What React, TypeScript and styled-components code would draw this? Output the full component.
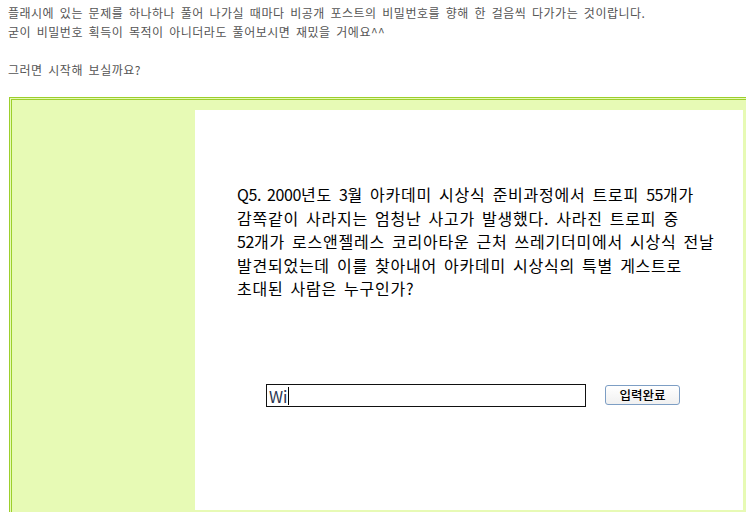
import React from "react";
import styled, { createGlobalStyle } from "styled-components";

const Global = createGlobalStyle`
  html, body { margin: 0; padding: 0; overflow: hidden; background: #fff; }
  body { font-family: "Noto Sans CJK KR", "Noto Sans", sans-serif; }
`;

const Page = styled.div`
  width: 746px;
  height: 512px;
  overflow: hidden;
`;

const Intro = styled.div`
  padding: 3px 8px 0 8px;
  font-size: 12px;
  line-height: 19px;
  color: #555;
  letter-spacing: 0.5px;
  word-spacing: 2.5px;
`;

const Line = styled.div`
  height: 19px;
  white-space: nowrap;
`;

const Frame = styled.div`
  margin: 18px 0 0 9px;
  width: 760px;
  border: 3px double #9ccf2c;
  border-right: none;
  background: #e7fab5;
  padding: 10px 0 2px 183px;
`;

const Stage = styled.div`
  width: 548px;
  height: 400px;
  background: #fff;
  display: flex;
  flex-direction: column;
`;

const Question = styled.div`
  margin: 73px 0 0 42px;
  font-size: 16px;
  line-height: 23.5px;
  color: #000;
  white-space: nowrap;
  letter-spacing: 0.75px;
  word-spacing: 2.8px;
`;

const Num = styled.span`
  letter-spacing: -0.4px;
`;

const AnswerRow = styled.div`
  margin: auto 0 103px 71px;
  display: flex;
  align-items: center;
  gap: 19px;
`;

const AnswerBox = styled.div`
  width: 316px;
  height: 21px;
  border: 1px solid #111;
  display: flex;
  align-items: center;
  padding-left: 2px;
  font-size: 16px;
  color: #2a3550;
`;

const Caret = styled.span`
  display: inline-block;
  width: 1px;
  height: 18px;
  background: #000;
  margin-left: 1px;
`;

const Submit = styled.button`
  width: 75px;
  height: 20px;
  border: 1px solid #7d9ec4;
  border-radius: 3px;
  background: linear-gradient(#ffffff, #f0f0f0);
  font-family: "Noto Sans CJK KR", sans-serif;
  font-size: 12.5px;
  font-weight: 500;
  color: #000;
  padding: 0;
  line-height: 18px;
  margin-top: -2px;
`;

export default function App() {
  return (
    <Page>
      <Global />
      <Intro>
        <Line>플래시에 있는 문제를 하나하나 풀어 나가실 때마다 비공개 포스트의 비밀번호를 향해 한 걸음씩 다가가는 것이랍니다.</Line>
        <Line>굳이 비밀번호 획득이 목적이 아니더라도 풀어보시면 재밌을 거에요^^</Line>
        <Line />
        <Line>그러면 시작해 보실까요?</Line>
      </Intro>
      <Frame>
        <Stage>
          <Question>
            <Num>Q5. 2000</Num>년도 <Num>3</Num>월 아카데미 시상식 준비과정에서 트로피 <Num>55</Num>개가
            <br />
            감쪽같이 사라지는 엄청난 사고가 발생했다. 사라진 트로피 중
            <br />
            <Num>52</Num>개가 로스앤젤레스 코리아타운 근처 쓰레기더미에서 시상식 전날
            <br />
            발견되었는데 이를 찾아내어 아카데미 시상식의 특별 게스트로
            <br />
            초대된 사람은 누구인가?
          </Question>
          <AnswerRow>
            <AnswerBox>
              Wi
              <Caret />
            </AnswerBox>
            <Submit>입력완료</Submit>
          </AnswerRow>
        </Stage>
      </Frame>
    </Page>
  );
}
